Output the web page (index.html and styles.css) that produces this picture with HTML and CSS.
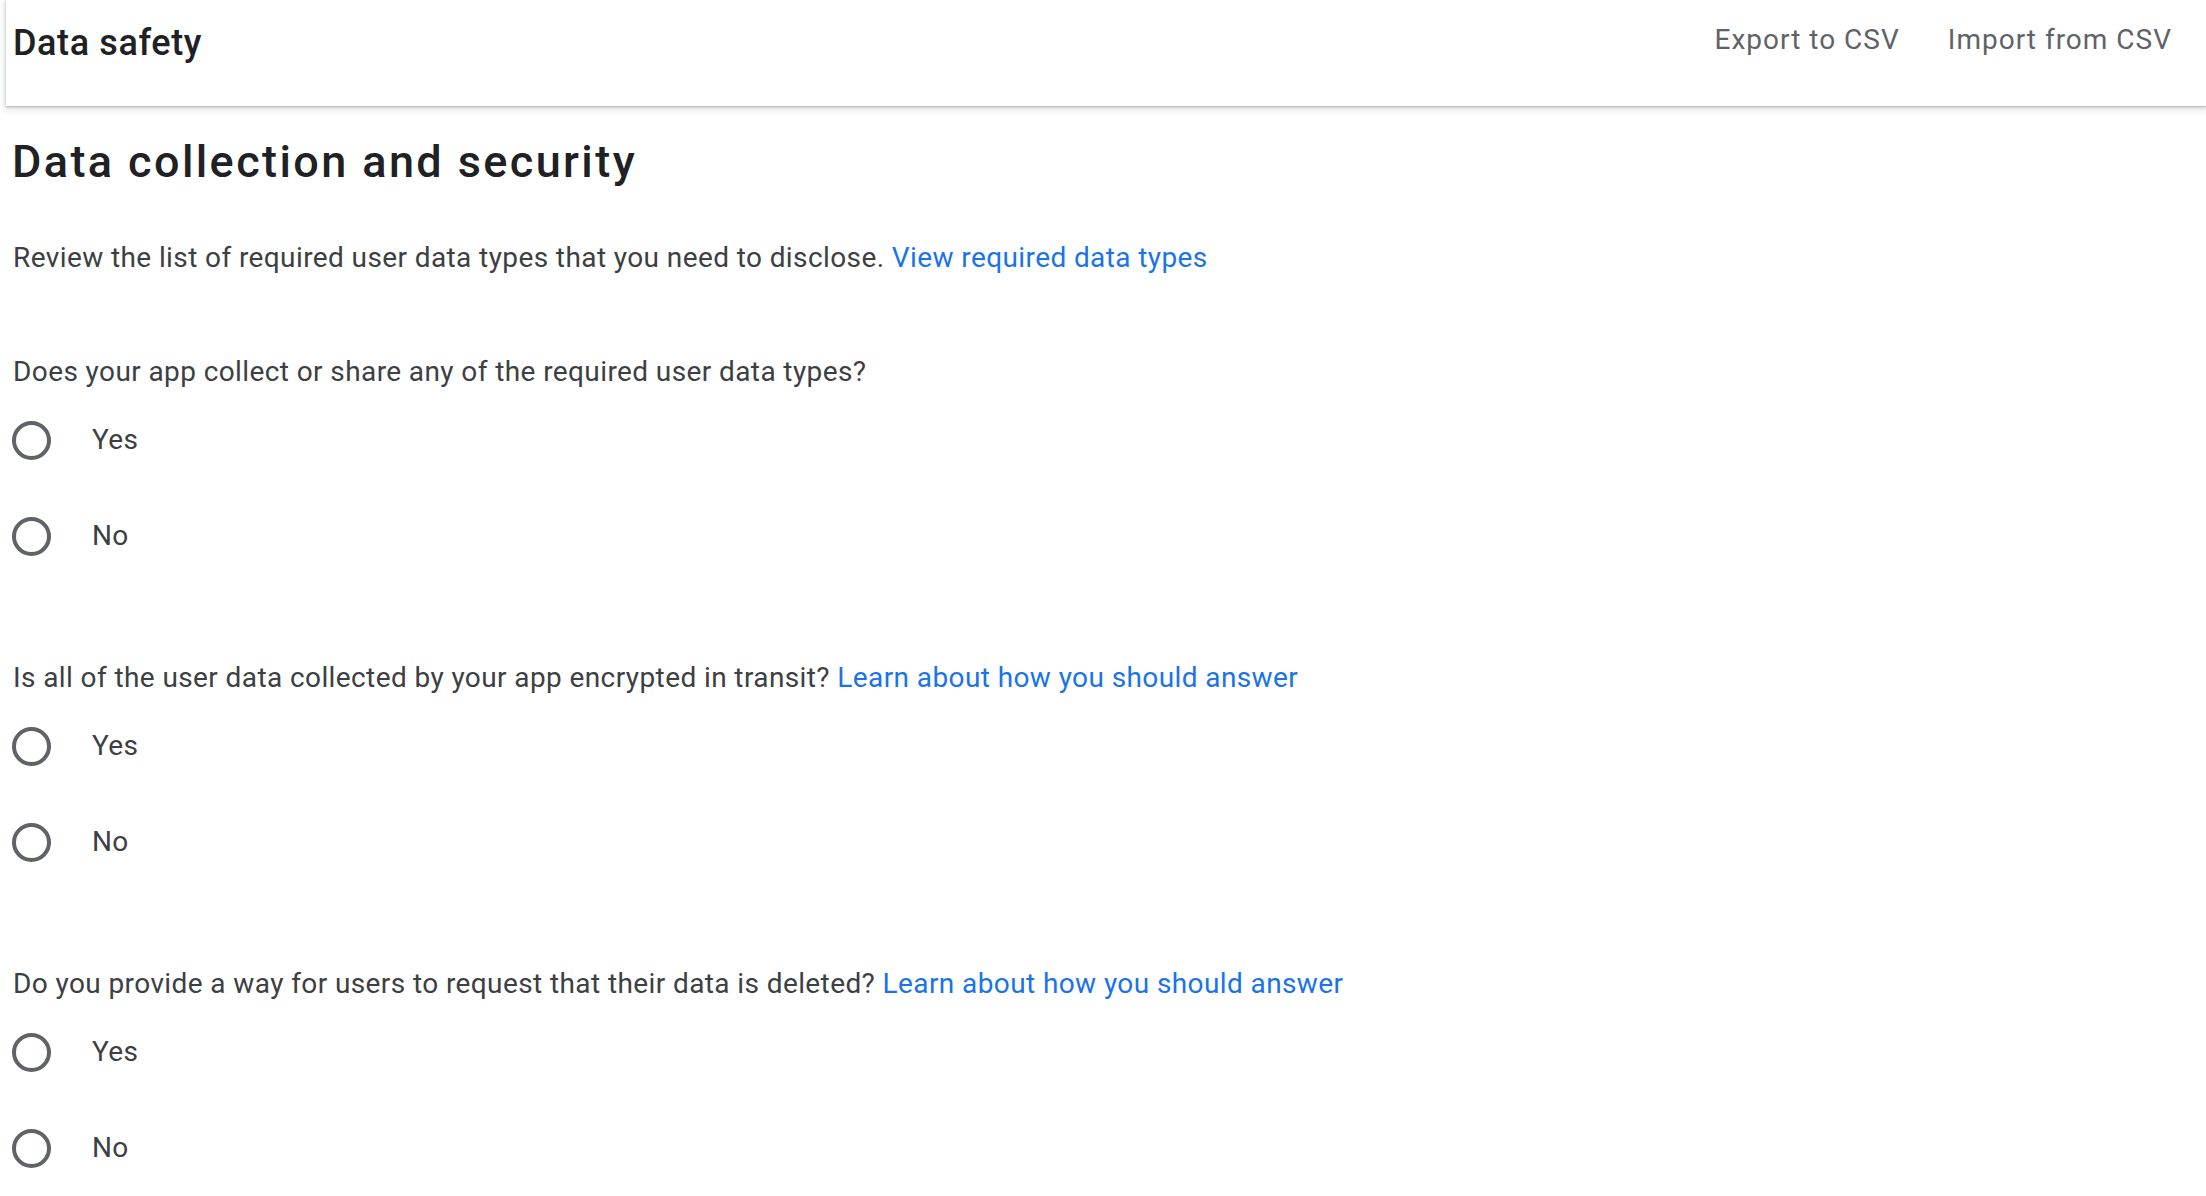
FILE: index.html
```html
<!DOCTYPE html>
<html lang="en">
<head>
<meta charset="utf-8">
<title>Data safety</title>
<link rel="stylesheet" href="styles.css">
</head>
<body>
<header class="topbar">
  <div class="topbar-title">Data safety</div>
  <nav class="topbar-actions">
    <a class="topbar-link" href="#">Export to CSV</a>
    <a class="topbar-link" href="#">Import from CSV</a>
  </nav>
</header>
<main class="content">
  <h1 class="page-heading">Data collection and security</h1>
  <p class="intro">Review the list of required user data types that you need to disclose. <a class="link" href="#">View required data types</a></p>

  <section class="question">
    <p class="question-text">Does your app collect or share any of the required user data types?</p>
    <label class="option"><span class="radio"></span><span class="option-label">Yes</span></label>
    <label class="option"><span class="radio"></span><span class="option-label">No</span></label>
  </section>

  <section class="question">
    <p class="question-text">Is all of the user data collected by your app encrypted in transit? <a class="link" href="#">Learn about how you should answer</a></p>
    <label class="option"><span class="radio"></span><span class="option-label">Yes</span></label>
    <label class="option"><span class="radio"></span><span class="option-label">No</span></label>
  </section>

  <section class="question">
    <p class="question-text">Do you provide a way for users to request that their data is deleted? <a class="link" href="#">Learn about how you should answer</a></p>
    <label class="option"><span class="radio"></span><span class="option-label">Yes</span></label>
    <label class="option"><span class="radio"></span><span class="option-label">No</span></label>
  </section>
</main>
</body>
</html>
```
FILE: styles.css
```css
html, body {
  margin: 0;
  padding: 0;
  background: #ffffff;
}

body {
  font-family: Roboto, "Liberation Sans", Arial, sans-serif;
  color: #3c4043;
  overflow: hidden;
}

.topbar {
  height: 106px;
  box-sizing: border-box;
  display: flex;
  align-items: flex-start;
  justify-content: space-between;
  padding: 0 34px 0 10px;
  margin-left: 6px;
  background: #ffffff;
  box-shadow: 0 1px 2px rgba(60, 64, 67, 0.3), 0 2px 6px 2px rgba(60, 64, 67, 0.15);
  position: relative;
}

.topbar-title {
  font-size: 36px;
  line-height: 42px;
  font-weight: 500;
  letter-spacing: 0.6px;
  color: #202124;
  padding-top: 22px;
  margin-left: -3px;
}

.topbar-actions {
  display: flex;
  gap: 48px;
  padding-top: 22px;
}

.topbar-link {
  font-size: 28px;
  line-height: 36px;
  letter-spacing: 1px;
  color: #5f6368;
  text-decoration: none;
}

.content {
  padding: 0 13px;
}

.page-heading {
  margin: 28px 0 0 -1px;
  font-size: 45px;
  line-height: 56px;
  font-weight: 500;
  letter-spacing: 2.4px;
  color: #202124;
}

.intro {
  margin: 48px 0 0;
  font-size: 28px;
  line-height: 40px;
  letter-spacing: 0.4px;
}

.link {
  color: #1a73e8;
  text-decoration: none;
}

.question {
  margin-top: 74px;
}

.question-text {
  margin: 0;
  font-size: 28px;
  line-height: 40px;
  letter-spacing: 0.4px;
}

.option {
  display: flex;
  align-items: center;
  height: 96px;
}

.radio {
  width: 39px;
  height: 39px;
  box-sizing: border-box;
  border: 4px solid #5f6368;
  border-radius: 50%;
  margin-left: -1px;
  flex: none;
}

.option-label {
  margin-left: 41px;
  font-size: 28px;
  line-height: 40px;
  letter-spacing: 0.4px;
  color: #3c4043;
}
```
